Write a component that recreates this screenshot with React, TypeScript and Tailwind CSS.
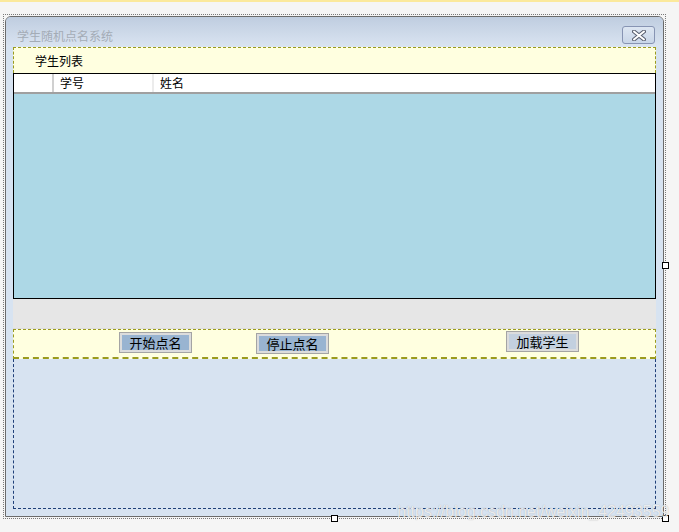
const cjk = { fontFamily: '"Noto Sans CJK SC", "Liberation Sans", sans-serif' };

function Handle({ className }: { className: string }) {
  return <div className={`absolute w-[7px] h-[7px] bg-white border border-black ${className}`} />;
}

function WinButton({ label, light }: { label: string; light?: boolean }) {
  return (
    <button className="block h-[21px] w-[73px] border border-[#a4a4a4] bg-[#dcdcdc] p-[2px]">
      <span
        className={`flex h-full w-full items-center justify-center text-[13px] leading-none text-black ${
          light ? 'bg-[#c3d0df]' : 'bg-[#99b4d1]'
        }`}
      >
        {label}
      </span>
    </button>
  );
}

export default function App() {
  return (
    <div className="relative w-[679px] h-[532px] bg-[#f5f5f5] overflow-hidden" style={cjk}>
      <div className="h-[2px] bg-[#fbe99c]" />
      <div className="ml-[3px] mt-[12px] w-[663px] h-[505px] border border-dotted border-[#7a7a7a] p-px">
        {/* window */}
        <div className="h-[501px] w-[659px] border border-[#6b6b6b] rounded-t-[6px] bg-[#d7e3f1] flex flex-col overflow-hidden">
          {/* title bar */}
          <div className="h-[30px] flex items-start justify-between bg-gradient-to-b from-[#bfcde0] to-[#dae4f1] pl-[11px] pr-[8px]">
            <span className="mt-[10px] text-[12px] leading-[17px] text-[#a4acb6]">学生随机点名系统</span>
            <div className="mt-[9px] w-[33px] h-[18px] rounded-[3px] border border-[#8794b3] bg-gradient-to-b from-[#dde6f2] to-[#c9d6e8] flex items-center justify-center">
              <svg width="14" height="11" viewBox="0 0 14 11">
                <path
                  d="M2 1.5 L12 9.5 M12 1.5 L2 9.5"
                  stroke="#5a6070"
                  strokeWidth="4"
                  strokeLinecap="round"
                />
                <path
                  d="M2 1.5 L12 9.5 M12 1.5 L2 9.5"
                  stroke="#ffffff"
                  strokeWidth="2"
                  strokeLinecap="round"
                />
              </svg>
            </div>
          </div>

          {/* body */}
          <div className="pl-[7px] flex flex-col w-[650px]">
            {/* label panel */}
            <div className="h-[26px] border border-dashed border-[#9b9b1e] border-b-0 bg-[#ffffe0] flex items-center pl-[21px]">
              <span className="text-[12px] text-black">学生列表</span>
            </div>

            {/* grid */}
            <div className="h-[226px] border border-black bg-[#add8e6] flex flex-col">
              <div className="h-[20px] bg-white border-b-2 border-[#a0a0a0] flex text-[12px] text-black">
                <div className="w-[40px] border-r-2 border-[#d0d0d0]" />
                <div className="w-[100px] border-r-2 border-[#ececec] pl-[6px] flex items-center">学号</div>
                <div className="pl-[6px] flex items-center">姓名</div>
              </div>
            </div>

            {/* grey panel */}
            <div className="h-[30px] bg-[#e6e6e6] border-b border-[#dcdcdc]" />

            {/* buttons panel */}
            <div className="h-[30px] bg-[#ffffe0] border border-dashed border-[#9b9b1e] border-b-2 flex items-start">
              <div className="ml-[105px] mt-[2px]">
                <WinButton label="开始点名" />
              </div>
              <div className="ml-[64px] mt-[3px]">
                <WinButton label="停止点名" />
              </div>
              <div className="ml-[177px] mt-[1px]">
                <WinButton label="加载学生" light />
              </div>
            </div>

            {/* lower panel */}
            <div className="h-[150px] border border-dashed border-t-0 border-[#1f3f78] bg-[#d7e3f1]" />
          </div>
        </div>
      </div>

      <Handle className="left-[662px] top-[262px]" />
      <Handle className="left-[331px] top-[515px]" />
      <Handle className="left-[662px] top-[515px]" />

      <div
        className="absolute left-[397px] top-[500px] text-[16px] text-white/75 [text-shadow:0_0_1px_rgba(80,80,80,0.4)]"
        style={{ fontFamily: '"Liberation Sans", sans-serif' }}
      >
        https://blog.csdn.net/weixin_42493559
      </div>
    </div>
  );
}
